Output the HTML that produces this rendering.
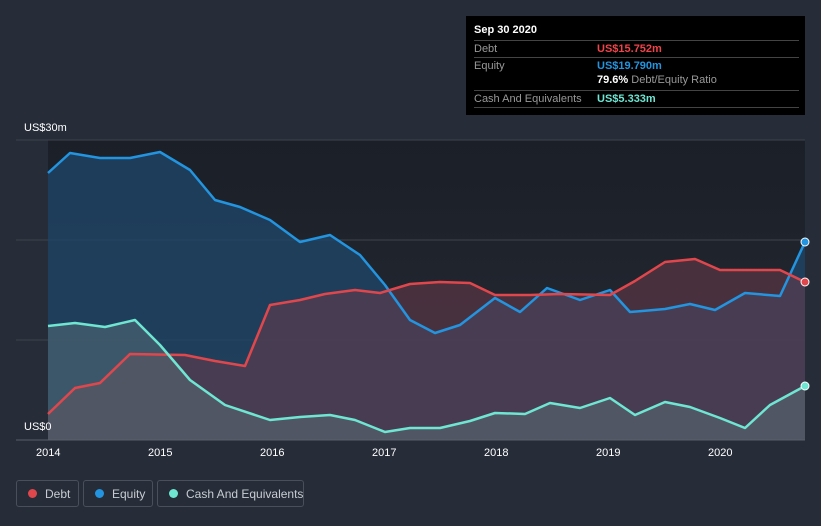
<!DOCTYPE html><html><head><style>
body{margin:0;width:821px;height:526px;background:#262d38;font-family:"Liberation Sans",sans-serif;overflow:hidden;position:relative}
.tt{position:absolute;left:466px;top:16px;width:339px;height:99px;background:#000;color:#fff;font-size:11px}
.row{position:absolute;left:8px;width:325px;border-top:1px solid #444;height:16px;line-height:16px}
.lg{position:absolute;top:480px;height:27px;border:1px solid #4a505b;border-radius:3px;color:#c8ccd2;font-size:12px;line-height:26px;box-sizing:border-box;white-space:nowrap}
.lg i{position:absolute;left:11px;top:8px;width:9px;height:9px;border-radius:50%}
.lg span{position:absolute;left:28px;white-space:nowrap}
.ax{position:absolute;color:#fff;font-size:11px}
</style></head><body>
<svg width="821" height="526" style="position:absolute;left:0;top:0">
<defs><linearGradient id="bg" x1="0" y1="0" x2="0" y2="1"><stop offset="0" stop-color="#1b1f27"/><stop offset="1" stop-color="#252b35"/></linearGradient></defs>
<rect x="48" y="140" width="757" height="300" fill="url(#bg)"/>
<line x1="16" y1="140" x2="805" y2="140" stroke="#3d434d"/>
<line x1="16" y1="240" x2="805" y2="240" stroke="#3d434d"/>
<line x1="16" y1="340" x2="805" y2="340" stroke="#3d434d"/>
<polygon fill="#1f4566" opacity="0.8" points="48,173 70,153 100,158 130,158 160,152 190,170 215,200 240,207 270,220 300,242 330,235 360,255 385,285 410,320 435,333 460,325 495,298 520,312 547,288 580,300 610,290 630,312 665,309 690,304 715,310 745,293 780,296 805,242 805,440 48,440"/>
<polygon fill="#6a3a4a" opacity="0.55" points="48,414 75,388 100,383 130,354 185,355 215,361 245,366 270,305 300,300 325,294 355,290 380,293 410,284 440,282 470,283 495,295 530,295 560,294 610,295 635,281 665,262 695,259 720,270 755,270 780,270 805,282 805,440 48,440"/>
<polygon fill="#5a7078" opacity="0.5" points="48,326 75,323 105,327 135,320 160,345 190,380 225,405 270,420 300,417 330,415 355,420 385,432 410,428 440,428 470,421 495,413 525,414 550,403 580,408 610,398 635,415 665,402 690,407 720,418 745,428 770,405 805,386 805,440 48,440"/>
<g fill="none" stroke-width="2.5" stroke-linejoin="round">
<polyline stroke="#2394df" points="48,173 70,153 100,158 130,158 160,152 190,170 215,200 240,207 270,220 300,242 330,235 360,255 385,285 410,320 435,333 460,325 495,298 520,312 547,288 580,300 610,290 630,312 665,309 690,304 715,310 745,293 780,296 805,242"/>
<polyline stroke="#e0474c" points="48,414 75,388 100,383 130,354 185,355 215,361 245,366 270,305 300,300 325,294 355,290 380,293 410,284 440,282 470,283 495,295 530,295 560,294 610,295 635,281 665,262 695,259 720,270 755,270 780,270 805,282"/>
<polyline stroke="#6ee6d2" points="48,326 75,323 105,327 135,320 160,345 190,380 225,405 270,420 300,417 330,415 355,420 385,432 410,428 440,428 470,421 495,413 525,414 550,403 580,408 610,398 635,415 665,402 690,407 720,418 745,428 770,405 805,386"/>
</g>
<line x1="16" y1="440" x2="805" y2="440" stroke="#5a606a"/>
<circle cx="805" cy="242" r="4" fill="#2394df" stroke="#fff" stroke-width="1"/>
<circle cx="805" cy="282" r="4" fill="#e0474c" stroke="#fff" stroke-width="1"/>
<circle cx="805" cy="386" r="4" fill="#6ee6d2" stroke="#fff" stroke-width="1"/>
</svg>
<div class="ax" style="left:24px;top:122px">US$30m</div>
<div class="ax" style="left:24px;top:421px">US$0</div>
<div class="ax" style="left:36px;top:447px">2014</div>
<div class="ax" style="left:148px;top:447px">2015</div>
<div class="ax" style="left:260px;top:447px">2016</div>
<div class="ax" style="left:372px;top:447px">2017</div>
<div class="ax" style="left:484px;top:447px">2018</div>
<div class="ax" style="left:596px;top:447px">2019</div>
<div class="ax" style="left:708px;top:447px">2020</div>
<div class="tt">
<div style="position:absolute;left:8px;top:8px;font-weight:bold">Sep 30 2020</div>
<div class="row" style="top:24px;color:#999">Debt<span style="position:absolute;left:123px;color:#f0434a;font-weight:bold">US$15.752m</span></div>
<div class="row" style="top:41px;color:#999">Equity<span style="position:absolute;left:123px;color:#2394df;font-weight:bold">US$19.790m</span></div>
<div style="position:absolute;left:131px;top:58px;color:#999"><b style="color:#fff">79.6%</b> Debt/Equity Ratio</div>
<div class="row" style="top:74px;color:#999">Cash And Equivalents<span style="position:absolute;left:123px;color:#6ee6d2;font-weight:bold">US$5.333m</span></div>
<div class="row" style="top:91px;height:0"></div>
</div>
<div class="lg" style="left:16px;width:63px"><i style="background:#e0474c"></i><span>Debt</span></div>
<div class="lg" style="left:83px;width:70px"><i style="background:#2394df"></i><span>Equity</span></div>
<div class="lg" style="left:157px;width:147px"><i style="background:#6ee6d2"></i><span>Cash And Equivalents</span></div>
</body></html>
